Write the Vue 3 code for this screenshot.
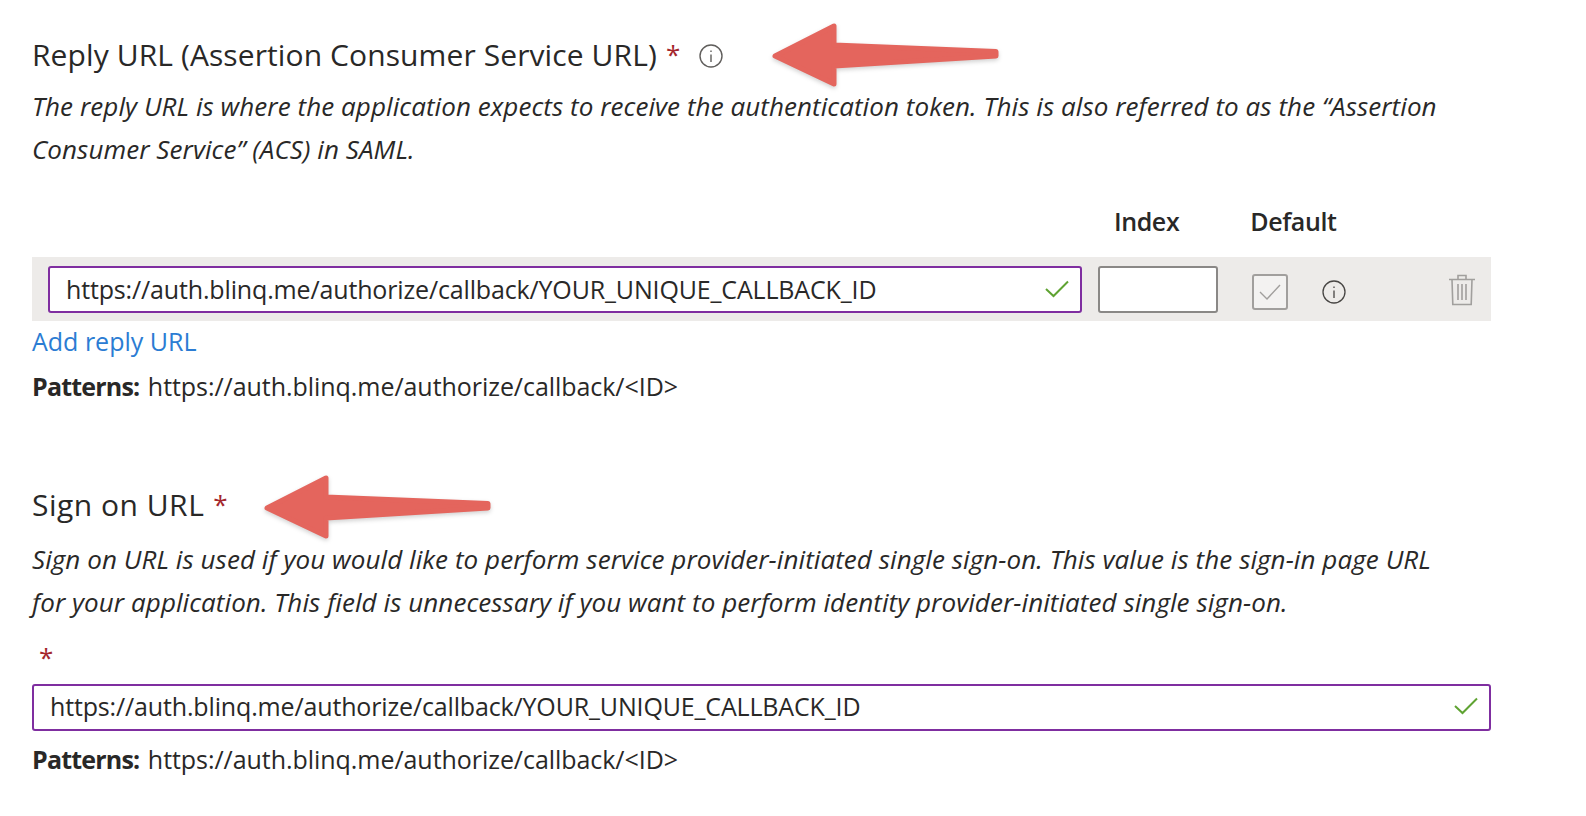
<template>
  <div class="page">
    <section class="reply-section">
      <h2 class="title">
        Reply URL (Assertion Consumer Service URL)<span class="req">*</span>
        <svg class="title-info" viewBox="0 0 24 24">
          <circle cx="12" cy="12" r="11" />
          <path d="M12 10.5v7.5M12 6.4v1.6" />
        </svg>
      </h2>
      <p class="desc">
        The reply URL is where the application expects to receive the authentication token. This is also referred to as the “Assertion Consumer Service” (ACS) in SAML.
      </p>

      <div class="col-heads">
        <span class="head-index">Index</span>
        <span class="head-default">Default</span>
      </div>

      <div class="url-row">
        <div class="field row-field">
          <span>{{ callbackUrl }}</span>
          <svg class="ok" viewBox="0 0 24 18"><path d="M1 9l7.5 7L23 1.5" /></svg>
        </div>
        <div class="index-box"></div>
        <div class="checkbox">
          <svg viewBox="0 0 24 18"><path d="M2 9l7 7L22 2" /></svg>
        </div>
        <svg class="row-info" viewBox="0 0 24 24">
          <circle cx="12" cy="12" r="11" />
          <path d="M12 10.5v7.5M12 6.4v1.6" />
        </svg>
        <svg class="trash" viewBox="0 0 26 32">
          <path d="M0 5.5h26M9 5V1.5h8V5M3 5.5l.8 25h18.4l.8-25M9 10v16M13 10v16M17 10v16" />
        </svg>
      </div>

      <a class="add-link">Add reply URL</a>
      <p class="patterns"><b>Patterns:</b> {{ patternUrl }}</p>
    </section>

    <section class="sign-section">
      <h2 class="title">Sign on URL<span class="req">*</span></h2>
      <p class="desc">
        Sign on URL is used if you would like to perform service provider-initiated single sign-on. This value is the sign-in page URL for your application. This field is unnecessary if you want to perform identity provider-initiated single sign-on.
      </p>
      <div class="lone-star">*</div>
      <div class="field wide-field">
        <span>{{ callbackUrl }}</span>
        <svg class="ok" viewBox="0 0 24 18"><path d="M1 9l7.5 7L23 1.5" /></svg>
      </div>
      <p class="patterns last"><b>Patterns:</b> {{ patternUrl }}</p>
    </section>

    <svg class="arrow arrow-one" viewBox="0 0 240 72">
      <path d="M9 36L68 6V25L230 31.5V36L68 46V64Z" />
    </svg>
    <svg class="arrow arrow-two" viewBox="0 0 240 72">
      <path d="M9 36L68 6V25L230 31.5V36L68 46V64Z" />
    </svg>
  </div>
</template>

<script setup>
const callbackUrl = 'https://auth.blinq.me/authorize/callback/YOUR_UNIQUE_CALLBACK_ID'
const patternUrl = 'https://auth.blinq.me/authorize/callback/<ID>'
</script>

<style>
body {
  background: #fff;
}
</style>

<style scoped>
.page {
  position: relative;
  width: 1586px;
  height: 816px;
  overflow: hidden;
  padding: 31px 0 0 32px;
  box-sizing: border-box;
  font-family: "Open Sans", "Noto Sans", sans-serif;
  color: #292827;
}

.reply-section,
.sign-section {
  width: 1459px;
}

.sign-section {
  margin-top: 76px;
}

.title {
  display: flex;
  align-items: center;
  margin: 0;
  height: 46px;
  font-size: 30px;
  font-weight: 400;
  letter-spacing: 0.1px;
}

.sign-section .title {
  letter-spacing: 0.5px;
}

.req {
  margin-left: 9px;
  color: #a4262c;
  font-size: 26px;
}

.title-info {
  width: 24px;
  height: 24px;
  margin: 3px 0 0 19px;
  fill: none;
  stroke: #605e5c;
  stroke-width: 1.4;
}

.desc {
  margin: 8px 0 0;
  width: 1420px;
  font-size: 26px;
  font-style: italic;
  line-height: 43px;
  letter-spacing: 0.07px;
}

.sign-section .desc {
  margin-top: 11px;
}

.col-heads {
  display: flex;
  margin: 28px 0 14px;
  height: 44px;
  align-items: center;
  font-size: 25px;
  font-weight: 600;
  letter-spacing: -0.4px;
}

.head-index {
  margin-left: 1082px;
}

.head-default {
  margin-left: 71px;
}

.url-row {
  display: flex;
  align-items: center;
  height: 64px;
  padding-left: 16px;
  background: #edebe9;
}

.field {
  display: flex;
  align-items: center;
  justify-content: space-between;
  box-sizing: border-box;
  height: 47px;
  padding: 0 11px 0 16px;
  background: #fff;
  border: 2px solid #7f2ea0;
  border-radius: 3px;
  font-size: 25px;
  letter-spacing: -0.15px;
}

.row-field {
  width: 1034px;
}

.wide-field {
  width: 1459px;
  margin-top: 2px;
  padding-bottom: 3px;
}

.ok {
  width: 24px;
  height: 18px;
  fill: none;
  stroke: #5fa332;
  stroke-width: 2;
}

.index-box {
  box-sizing: border-box;
  width: 120px;
  height: 47px;
  margin-left: 16px;
  background: #fff;
  border: 2px solid #8a8886;
  border-radius: 3px;
}

.checkbox {
  display: flex;
  align-items: center;
  justify-content: center;
  box-sizing: border-box;
  width: 36px;
  height: 36px;
  margin: 6px 0 0 34px;
  border: 2px solid #a19f9d;
  border-radius: 3px;
  background: #f3f2f1;
}

.checkbox svg {
  width: 24px;
  height: 18px;
  fill: none;
  stroke: #a19f9d;
  stroke-width: 1.4;
}

.row-info {
  width: 24px;
  height: 24px;
  margin: 6px 0 0 34px;
  fill: none;
  stroke: #484644;
  stroke-width: 1.3;
}

.trash {
  width: 26px;
  height: 32px;
  margin: 2px 0 0 103px;
  fill: none;
  stroke: #a19f9d;
  stroke-width: 1.6;
}

.add-link {
  display: block;
  height: 40px;
  line-height: 40px;
  font-size: 25px;
  color: #2b7cd3;
}

.patterns {
  margin: 6px 0 0;
  height: 38px;
  line-height: 38px;
  font-size: 25px;
  letter-spacing: -0.05px;
}

.patterns b {
  margin-right: 2px;
  font-weight: 700;
  letter-spacing: -0.8px;
}

.lone-star {
  height: 47px;
  margin: 11px 0 0 7px;
  line-height: 44px;
  font-size: 26px;
  color: #a4262c;
}

.sign-section .patterns.last {
  margin-top: 9px;
}

.arrow {
  position: absolute;
  width: 240px;
  height: 72px;
  fill: #e4655d;
  stroke: #e4655d;
  stroke-width: 5;
  stroke-linejoin: round;
  filter: drop-shadow(0 2px 2px rgba(0, 0, 0, 0.18));
}

.arrow-one {
  left: 766px;
  top: 20px;
}

.arrow-two {
  left: 258px;
  top: 472px;
}
</style>
